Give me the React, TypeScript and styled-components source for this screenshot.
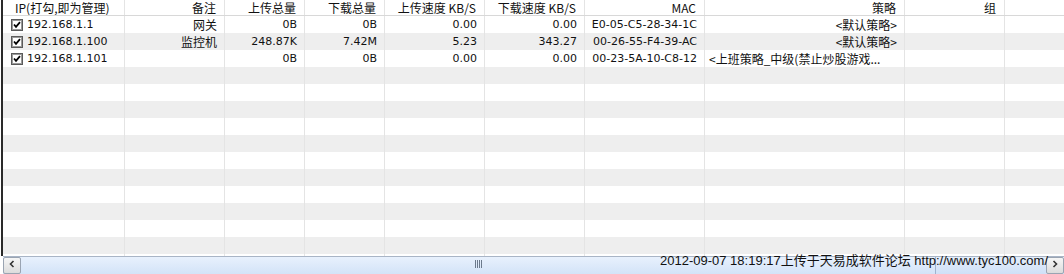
import React from 'react'
import styled, { createGlobalStyle } from 'styled-components'

const GlobalStyle = createGlobalStyle`
  html, body {
    margin: 0;
    padding: 0;
    background: #fff;
    overflow: hidden;
  }
`

const COLS = '122px 100px 80px 80px 100px 100px 120px 200px 100px 1fr'

const Window = styled.div`
  position: relative;
  width: 1064px;
  height: 274px;
  overflow: hidden;
  display: flex;
  flex-direction: column;
  background: #fff;
  font-family: 'DejaVu Sans', 'Noto Sans CJK SC', sans-serif;
  font-size: 11px;
  color: #111;
`

const Frame = styled.div`
  flex: 1;
  display: flex;
  flex-direction: column;
  min-height: 0;
  border-left: 2px solid #2a2a2a;
  margin-left: 1px;
`

const Table = styled.div`
  flex: 1;
  min-height: 0;
  overflow: hidden;
`

const HeaderRow = styled.div`
  display: grid;
  grid-template-columns: ${COLS};
  height: 15px;
  border-bottom: 1px solid #d8d8d8;
  background: #fff;
`

const HeaderCell = styled.div<{ $left?: boolean }>`
  font-family: 'Noto Sans CJK SC', sans-serif;
  font-size: 12px;
  line-height: 15px;
  text-align: ${p => (p.$left ? 'left' : 'right')};
  padding: ${p => (p.$left ? '0 0 0 12px' : '0 8px 0 0')};
  border-right: 1px solid #e4e4e4;
  white-space: nowrap;
  overflow: hidden;
  &:last-child {
    border-right: none;
  }
`

const Row = styled.div<{ $alt: boolean }>`
  display: grid;
  grid-template-columns: ${COLS};
  height: 17px;
  background: ${p => (p.$alt ? '#eeeeee' : '#fff')};
`

const Cell = styled.div<{ $cjk?: boolean; $start?: boolean }>`
  display: flex;
  align-items: center;
  justify-content: ${p => (p.$start ? 'flex-start' : 'flex-end')};
  padding: 0 7px 0 4px;
  border-right: 1px solid #e4e4e4;
  font-family: ${p => (p.$cjk ? "'Noto Sans CJK SC', sans-serif" : "'DejaVu Sans', 'Noto Sans CJK SC', sans-serif")};
  font-size: ${p => (p.$cjk ? '12px' : '11px')};
  white-space: nowrap;
  overflow: hidden;
  min-width: 0;
  &:last-child {
    border-right: none;
  }
`

const IpCell = styled.div`
  display: flex;
  align-items: center;
  gap: 4px;
  padding-left: 8px;
  border-right: 1px solid #e4e4e4;
  white-space: nowrap;
  overflow: hidden;
`

const Scrollbar = styled.div`
  flex: 0 0 17px;
  display: flex;
  border-top: 1px solid #a9b5c6;
  background: linear-gradient(#e4eefb, #cfe0f7);
  margin-left: 3px;
`

const ArrowButton = styled.div`
  width: 18px;
  display: flex;
  align-items: flex-start;
  justify-content: center;
  padding-top: 2px;
  border: 1px solid #9aa4b2;
  border-radius: 2px;
  background: linear-gradient(#f6f6f6, #dcdcdc);
  box-sizing: border-box;
`

const Thumb = styled.div`
  width: 914px;
  display: flex;
  justify-content: center;
  padding-top: 3px;
  border-right: 1px solid #9fb3cf;
  background: linear-gradient(#e8f1fd, #d3e3f8);
`

const Track = styled.div`
  flex: 1;
`

const Grip = styled.div`
  width: 7px;
  height: 8px;
  background: repeating-linear-gradient(90deg, #6c7a8c 0 1px, transparent 1px 2px);
`

const Watermark = styled.div`
  position: absolute;
  left: 660px;
  top: 252px;
  font-family: 'Liberation Sans', 'Noto Sans CJK SC', sans-serif;
  font-size: 13px;
  line-height: 17px;
  color: #111;
  white-space: nowrap;
`

const Check = () => (
  <svg width="12" height="12" viewBox="0 0 12 12">
    <rect x="0.5" y="0.5" width="11" height="11" fill="#fff" stroke="#5a5a5a" />
    <rect x="1.5" y="1.5" width="9" height="9" fill="none" stroke="#9a9a9a" />
    <path d="M3 5.5 L5 7.8 L9 3.2" fill="none" stroke="#000" strokeWidth="1.8" />
  </svg>
)

type Host = {
  ip: string
  note: string
  up: string
  down: string
  upSpeed: string
  downSpeed: string
  mac: string
  policy: string
  clipped?: boolean
}

const hosts: Host[] = [
  { ip: '192.168.1.1', note: '网关', up: '0B', down: '0B', upSpeed: '0.00', downSpeed: '0.00', mac: 'E0-05-C5-28-34-1C', policy: '<默认策略>' },
  { ip: '192.168.1.100', note: '监控机', up: '248.87K', down: '7.42M', upSpeed: '5.23', downSpeed: '343.27', mac: '00-26-55-F4-39-AC', policy: '<默认策略>' },
  { ip: '192.168.1.101', note: '', up: '0B', down: '0B', upSpeed: '0.00', downSpeed: '0.00', mac: '00-23-5A-10-C8-12', policy: '<上班策略_中级(禁止炒股游戏...', clipped: true },
]

const headers = ['备注', '上传总量', '下载总量', '上传速度 KB/S', '下载速度 KB/S', 'MAC', '策略', '组', '']

const App: React.FC = () => {
  const empty = Array.from({ length: 12 })

  return (
    <Window>
      <GlobalStyle />
      <Frame>
        <Table>
          <HeaderRow>
            <HeaderCell $left>IP(打勾,即为管理)</HeaderCell>
            {headers.map((h, i) => (
              <HeaderCell key={i}>{h}</HeaderCell>
            ))}
          </HeaderRow>
          {hosts.map((h, i) => (
            <Row key={h.ip} $alt={i % 2 === 1}>
              <IpCell>
                <Check />
                {h.ip}
              </IpCell>
              <Cell $cjk>{h.note}</Cell>
              <Cell>{h.up}</Cell>
              <Cell>{h.down}</Cell>
              <Cell>{h.upSpeed}</Cell>
              <Cell>{h.downSpeed}</Cell>
              <Cell>{h.mac}</Cell>
              <Cell $cjk $start={h.clipped}>{h.policy}</Cell>
              <Cell />
              <Cell />
            </Row>
          ))}
          {empty.map((_, i) => (
            <Row key={i} $alt={(i + hosts.length) % 2 === 1}>
              <IpCell />
              <Cell />
              <Cell />
              <Cell />
              <Cell />
              <Cell />
              <Cell />
              <Cell />
              <Cell />
              <Cell />
            </Row>
          ))}
        </Table>
      </Frame>
      <Scrollbar>
        <ArrowButton>
          <svg width="8" height="8" viewBox="0 0 8 8">
            <path d="M5.5 1 L2.5 4 L5.5 7" fill="none" stroke="#333" strokeWidth="1.6" />
          </svg>
        </ArrowButton>
        <Thumb>
          <Grip />
        </Thumb>
        <Track />
        <ArrowButton>
          <svg width="8" height="8" viewBox="0 0 8 8">
            <path d="M2.5 1 L5.5 4 L2.5 7" fill="none" stroke="#333" strokeWidth="1.6" />
          </svg>
        </ArrowButton>
      </Scrollbar>
      <Watermark>2012-09-07 18:19:17上传于天易成软件论坛 http://www.tyc100.com/</Watermark>
    </Window>
  )
}

export default App
